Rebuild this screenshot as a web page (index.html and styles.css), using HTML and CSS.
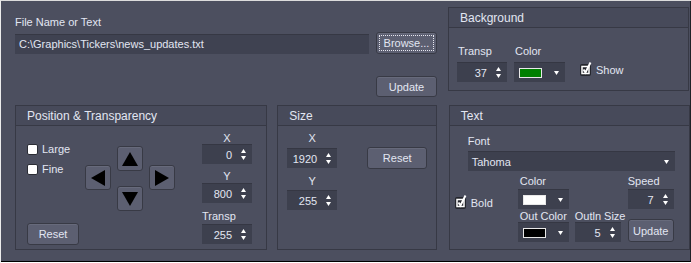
FILE: index.html
```html
<!DOCTYPE html>
<html lang="en">
<head>
  <meta charset="UTF-8">
  <title>Ticker Settings</title>
  <link rel="stylesheet" href="styles.css">
</head>
<body>
  <div class="frame">
    <div class="window">
      <div class="top">
        <div class="file">
          <div class="label">File Name or Text</div>
          <div class="file-row">
            <div class="input">C:\Graphics\Tickers\news_updates.txt</div>
            <div class="btn btn-browse"><span class="focus">Browse...</span></div>
          </div>
          <div class="btn btn-update">Update</div>
        </div>

        <div class="panel panel-bg">
          <div class="panel-head">Background</div>
          <div class="panel-body bg-body">
            <div class="field">
              <div class="label">Transp</div>
              <div class="spin"><span>37</span><svg width="5" height="11" viewBox="0 0 5 11"><path d="M0 4L2.5 0L5 4Z M0 7L5 7L2.5 11Z" fill="#fff"/></svg></div>
            </div>
            <div class="field">
              <div class="label">Color</div>
              <div class="combo"><span class="swatch sw-green"></span><svg width="5" height="4" viewBox="0 0 5 4"><path d="M0 0L5 0L2.5 4Z" fill="#fff"/></svg></div>
            </div>
            <div class="check check-show"><svg class="box-on" width="12" height="14" viewBox="0 0 12 14"><rect x="0" y="2" width="11" height="12" rx="2" fill="#24262d"/><rect x="2" y="4.5" width="7" height="7" fill="none" stroke="#fff" stroke-width="1.5"/><path d="M3.5 7.5L5.5 10.5L10.5 0.5" fill="none" stroke="#fff" stroke-width="2"/></svg>Show</div>
          </div>
        </div>
      </div>

      <div class="bottom">
        <div class="panel panel-pos">
          <div class="panel-head">Position &amp; Transparency</div>
          <div class="panel-body pos-body">
            <div class="pos-left">
              <div class="check"><span class="box-off"></span>Large</div>
              <div class="check check-fine"><span class="box-off"></span>Fine</div>
              <div class="btn btn-reset">Reset</div>
            </div>
            <div class="pad">
              <div class="arrow a-up"><svg width="16" height="14" viewBox="0 0 16 14"><path d="M8 0L16 14L0 14Z"/></svg></div>
              <div class="arrow a-left"><svg width="14" height="16" viewBox="0 0 14 16"><path d="M0 8L14 0L14 16Z"/></svg></div>
              <div class="arrow a-right"><svg width="14" height="16" viewBox="0 0 14 16"><path d="M14 8L0 0L0 16Z"/></svg></div>
              <div class="arrow a-down"><svg width="16" height="14" viewBox="0 0 16 14"><path d="M8 14L16 0L0 0Z"/></svg></div>
            </div>
            <div class="pos-spins">
              <div class="label center">X</div>
              <div class="spin"><span>0</span><svg width="5" height="11" viewBox="0 0 5 11"><path d="M0 4L2.5 0L5 4Z M0 7L5 7L2.5 11Z" fill="#fff"/></svg></div>
              <div class="label center lbl-y">Y</div>
              <div class="spin spin-y"><span>800</span><svg width="5" height="11" viewBox="0 0 5 11"><path d="M0 4L2.5 0L5 4Z M0 7L5 7L2.5 11Z" fill="#fff"/></svg></div>
              <div class="label lbl-transp">Transp</div>
              <div class="spin spin-transp"><span>255</span><svg width="5" height="11" viewBox="0 0 5 11"><path d="M0 4L2.5 0L5 4Z M0 7L5 7L2.5 11Z" fill="#fff"/></svg></div>
            </div>
          </div>
        </div>

        <div class="panel panel-size">
          <div class="panel-head">Size</div>
          <div class="panel-body size-body">
            <div class="size-spins">
              <div class="label center">X</div>
              <div class="spin spin-sx"><span>1920</span><svg width="5" height="11" viewBox="0 0 5 11"><path d="M0 4L2.5 0L5 4Z M0 7L5 7L2.5 11Z" fill="#fff"/></svg></div>
              <div class="label center lbl-sy">Y</div>
              <div class="spin spin-sy"><span>255</span><svg width="5" height="11" viewBox="0 0 5 11"><path d="M0 4L2.5 0L5 4Z M0 7L5 7L2.5 11Z" fill="#fff"/></svg></div>
            </div>
            <div class="btn btn-size-reset">Reset</div>
          </div>
        </div>

        <div class="panel panel-text">
          <div class="panel-head">Text</div>
          <div class="panel-body text-body">
            <div class="label lbl-font">Font</div>
            <div class="combo combo-font"><span>Tahoma</span><svg width="5" height="4" viewBox="0 0 5 4"><path d="M0 0L5 0L2.5 4Z" fill="#fff"/></svg></div>
            <div class="text-grid">
              <div class="check check-bold"><svg class="box-on" width="12" height="14" viewBox="0 0 12 14"><rect x="0" y="2" width="11" height="12" rx="2" fill="#24262d"/><rect x="2" y="4.5" width="7" height="7" fill="none" stroke="#fff" stroke-width="1.5"/><path d="M3.5 7.5L5.5 10.5L10.5 0.5" fill="none" stroke="#fff" stroke-width="2"/></svg>Bold</div>
              <div class="label g-color">Color</div>
              <div class="combo g-colorbox"><span class="swatch sw-white"></span><svg width="5" height="4" viewBox="0 0 5 4"><path d="M0 0L5 0L2.5 4Z" fill="#fff"/></svg></div>
              <div class="label g-speed">Speed</div>
              <div class="spin spin-speed g-speedbox"><span>7</span><svg width="5" height="11" viewBox="0 0 5 11"><path d="M0 4L2.5 0L5 4Z M0 7L5 7L2.5 11Z" fill="#fff"/></svg></div>
              <div class="label g-out">Out Color</div>
              <div class="combo g-outbox"><span class="swatch sw-black"></span><svg width="5" height="4" viewBox="0 0 5 4"><path d="M0 0L5 0L2.5 4Z" fill="#fff"/></svg></div>
              <div class="label g-outln">Outln Size</div>
              <div class="spin spin-speed g-outlnbox"><span>5</span><svg width="5" height="11" viewBox="0 0 5 11"><path d="M0 4L2.5 0L5 4Z M0 7L5 7L2.5 11Z" fill="#fff"/></svg></div>
              <div class="btn btn-text-update">Update</div>
            </div>
          </div>
        </div>
      </div>
    </div>
  </div>
</body>
</html>
```

FILE: styles.css
```css
* { box-sizing: border-box; }
html, body {
  margin: 0; padding: 0;
  background: #4c4f5f;
}
body {
  font-family: "Liberation Sans", Arial, sans-serif;
  font-size: 11px;
  color: #e2e6f2;
}

/* Window frame */
.frame {
  width: 691px; height: 263px;
  border-top: 1px solid #dcdcdc;
  border-left: 1px solid #ececec;
  border-bottom: 1px solid #fff;
}
.window {
  height: 100%;
  background: #4c4f5f;
  border-bottom: 1px solid #000;
  border-right: 1px solid #202127;
}

.label { line-height: 13px; white-space: nowrap; }
.center { text-align: center; }

/* Top row */
.top { display: flex; height: 104px; }
.file {
  width: 422px; margin-left: 14px; padding-top: 15px;
  display: flex; flex-direction: column;
}
.file-row {
  display: flex; align-items: flex-end; gap: 7px;
  margin-top: 3px;
}
.input {
  width: 354px; height: 20px;
  background: #3f4251;
  border-top: 1px solid #363844;
  padding: 2px 0 0 4px; line-height: 15px;
  white-space: nowrap;
}

/* Buttons */
.btn {
  background: #5c5f71;
  border: 1px solid #383a45;
  border-radius: 3px;
  box-shadow: inset 0 1px 0 rgba(255,255,255,0.07);
  display: flex; align-items: center; justify-content: center;
  color: #e2e6f2;
}
.btn-browse { width: 61px; height: 22px; padding: 2px; }
.btn-browse .focus {
  flex: 1; align-self: stretch;
  border: 1px dotted #e8e8f0;
  display: flex; align-items: center; justify-content: center;
}
.btn-update { width: 61px; height: 21px; margin-top: 22px; align-self: flex-end; }

/* Panels */
.panel {
  border: 1px solid #373945;
  display: flex; flex-direction: column;
}
.panel-head {
  height: 20px; padding: 2px 0 0 11px;
  line-height: 17px; font-size: 12px;
  background: #474a5a;
  border-bottom: 1px solid #373945;
  white-space: nowrap;
}
.panel-body { flex: 1; }

/* Background panel */
.panel-bg { width: 241px; height: 84px; margin: 6px 0 0 11px; }
.bg-body { display: flex; padding: 17px 0 0 8px; gap: 7px; align-items: flex-start; }
.field .label { padding-left: 1px; }
.field .spin, .field .combo { margin-top: 4px; }
.check-show { margin: 19px 0 0 8px; }

/* Spin box */
.spin {
  width: 50px; height: 20px;
  background: #3d404e;
  border-top: 1px solid #353743;
  display: flex; align-items: center; justify-content: flex-end;
  padding-right: 6px;
}
.spin span { margin-right: 9px; }
.spin-speed { width: 46px; }

/* Combo box */
.combo {
  width: 51px; height: 20px;
  background: #3d404e;
  border-top: 1px solid #353743;
  display: flex; align-items: center; justify-content: space-between;
  padding: 0 6px 0 5px;
}
.swatch { width: 23px; height: 10px; border: 1px solid #e8e8e8; }
.sw-green { background: #008000; }
.sw-white { background: #fff; }
.sw-black { background: #000; }

/* Checkboxes */
.check { display: flex; align-items: center; line-height: 13px; gap: 4px; }
.box-off {
  width: 11px; height: 11px;
  background: #fff; border: 1px solid #2a2c34; border-radius: 2px;
}
.box-on { margin-top: -3px; }

/* Position panel */
.bottom { display: flex; padding-left: 14px; }
.bottom .panel { height: 145px; }
.panel-pos { width: 253px; }
.pos-body { display: flex; padding: 0 0 4px 11px; }
.pos-left { width: 58px; display: flex; flex-direction: column; padding-top: 17px; }
.check-fine { margin-top: 7px; }
.btn-reset { width: 52px; height: 22px; margin-top: auto; }

.pad {
  display: grid;
  grid-template-columns: 26px 26px 26px;
  grid-template-rows: 19px 21px 25px;
  column-gap: 6px;
  margin-top: 20px;
  align-self: flex-start;
}
.arrow {
  width: 26px; height: 25px;
  background: #5c5f71;
  border: 1px solid #383a45;
  border-radius: 3px;
  box-shadow: inset 0 1px 0 rgba(255,255,255,0.07);
  display: flex; align-items: center; justify-content: center;
  align-self: start;
}
.arrow svg { fill: #000; }
.a-up { grid-column: 2; grid-row: 1; }
.a-left { grid-column: 1; grid-row: 2; }
.a-right { grid-column: 3; grid-row: 2; }
.a-down { grid-column: 2; grid-row: 3; }

.pos-spins { width: 50px; margin-left: 27px; padding-top: 6px; display: flex; flex-direction: column; }
.pos-spins .label { line-height: 12px; }
.lbl-y { margin-top: 6px; }
.spin-y { margin-top: 1px; }
.lbl-transp { margin-top: 7px; }
.spin-transp { margin-top: 2px; }

/* Size panel */
.panel-size { width: 160px; margin-left: 10px; }
.size-body { display: flex; padding-left: 9px; }
.size-spins { width: 50px; padding-top: 6px; display: flex; flex-direction: column; }
.size-spins .label { line-height: 12px; }
.spin-sx { margin-top: 4px; }
.lbl-sy { margin-top: 7px; }
.spin-sy { margin-top: 3px; }
.btn-size-reset { width: 60px; height: 22px; margin: 21px 0 0 30px; }

/* Text panel */
.panel-text { width: 242px; margin-left: 12px; }
.text-body { padding-top: 9px; }
.lbl-font { margin-left: 18px; }
.combo-font { width: 207px; margin: 3px 0 0 18px; padding-left: 4px; }
.text-grid {
  display: grid;
  grid-template-columns: 68px 51px 6px 47px 6px 46px;
  grid-template-rows: 13px 21px 13px 20px;
  margin-top: 4px;
}
.text-grid .spin, .text-grid .combo { align-self: end; }
.check-bold { grid-column: 1; grid-row: 2 / 4; align-self: start; margin: 9px 0 0 5px; }
.g-color { grid-column: 2; grid-row: 1; padding-left: 2px; }
.g-colorbox { grid-column: 2; grid-row: 2; }
.g-speed { grid-column: 6; grid-row: 1; }
.g-speedbox { grid-column: 6; grid-row: 2; }
.g-out { grid-column: 2 / 5; grid-row: 3; padding: 1px 0 0 2px; }
.g-outbox { grid-column: 2; grid-row: 4; }
.g-outln { grid-column: 4 / 7; grid-row: 3; padding-top: 1px; }
.g-outlnbox { grid-column: 4; grid-row: 4; }
.btn-text-update { grid-column: 6; grid-row: 3 / 5; align-self: end; width: 46px; height: 23px; }
```
